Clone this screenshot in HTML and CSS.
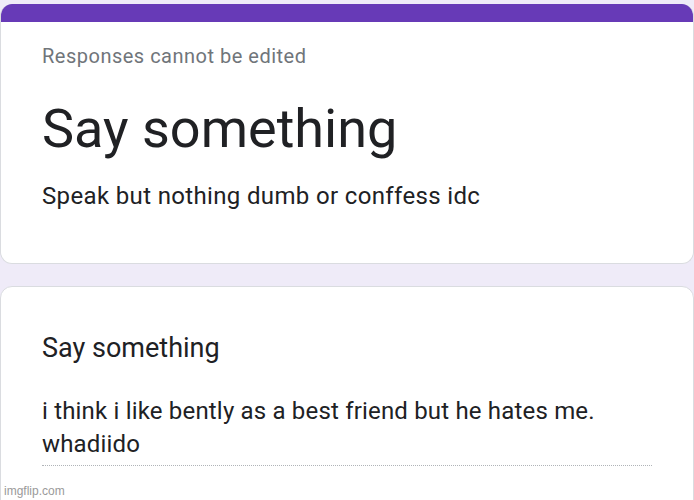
FILE: index.html
```html
<!DOCTYPE html>
<html>
<head>
<meta charset="utf-8">
<link rel="stylesheet" href="styles.css">
</head>
<body>
<div class="page">
  <div class="card head">
    <div class="bar"></div>
    <div class="inner">
      <div class="note">Responses cannot be edited</div>
      <h1 class="title">Say something</h1>
      <div class="desc">Speak but nothing dumb or conffess idc</div>
    </div>
  </div>
  <div class="card q">
    <div class="qtitle">Say something</div>
    <div class="answer">i think i like bently as a best friend but he hates me. whadiido</div>
  </div>
</div>
<div class="wm">imgflip.com</div>
</body>
</html>
```
FILE: styles.css
```css
html, body { margin: 0; padding: 0; }
body {
  width: 694px; height: 500px; overflow: hidden;
  background: #efebf8;
  font-family: Roboto, "Noto Sans", sans-serif;
  color: #202124;
  position: relative;
}
.page { padding-top: 4px; display: flex; flex-direction: column; gap: 22px; }
.card {
  background: #fff;
  border: 1px solid #dadce0;
  border-radius: 12px;
  overflow: hidden;
  box-sizing: border-box;
  width: 694px;
  flex-shrink: 0;
}
.head { height: 260px; border-top: none; }
.bar { height: 18px; background: #673ab7; }
.inner { padding: 22px 20px 0 41px; }
.note { font-size: 20px; color: #70757a; line-height: 24px; letter-spacing: 0.5px; }
.title { margin: 29px 0 0; font-weight: 400; font-size: 54px; line-height: 64px; letter-spacing: 0; }
.desc { margin-top: 20px; font-size: 24px; line-height: 30px; letter-spacing: 0.35px; }
.q { height: 240px; padding: 45px 20px 0 41px; }
.qtitle { font-size: 27px; line-height: 32px; }
.answer {
  margin-top: 31px; font-size: 24px; line-height: 33px; width: 610px; letter-spacing: 0.18px;
  border-bottom: 1px dotted #b0b4b8; padding-bottom: 4px;
}
.wm { position: absolute; left: 4px; bottom: 2px; font-size: 12px; color: #9a9a9a; font-family: "Liberation Sans", Arial, sans-serif; }
```
